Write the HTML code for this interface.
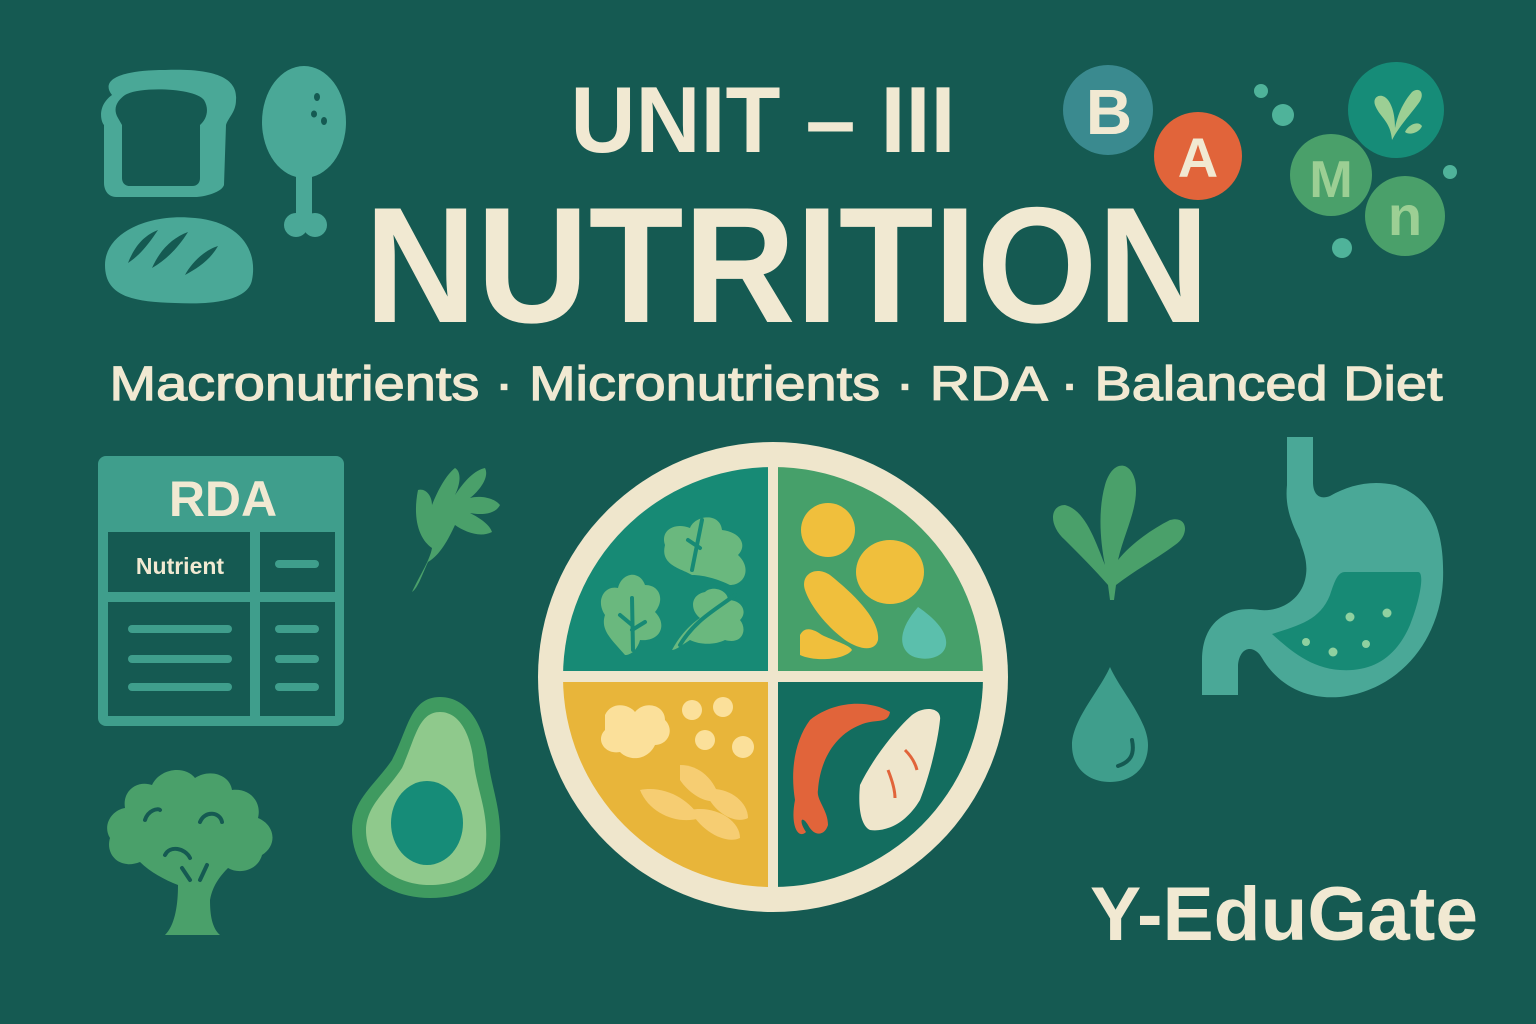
<!DOCTYPE html>
<html><head><meta charset="utf-8"><style>html,body{margin:0;padding:0;background:#155a52;}svg{display:block}</style></head>
<body>
<svg width="1536" height="1024" viewBox="0 0 1536 1024" xmlns="http://www.w3.org/2000/svg" font-family="Liberation Sans, sans-serif">
<rect width="1536" height="1024" fill="#155a52"/>
<!-- bread slice -->
<path d="M112 95 C100 80 120 70 165 70 C215 68 238 78 236 100 C236 112 228 118 226 125 L224 185 C222 192 205 197 195 197 L116 197 C108 197 104 190 104 183 L104 125 C100 120 98 105 112 95 Z" fill="#4aa897"/>
<path d="M125 95 C118 100 112 108 118 118 L122 125 L122 178 C122 183 125 186 130 186 L192 186 C198 186 200 182 200 178 L200 125 C206 120 210 110 204 100 C195 88 140 86 125 95 Z" fill="#155a52"/>
<!-- drumstick -->
<ellipse cx="304" cy="122" rx="42" ry="56" fill="#4aa897"/>
<rect x="296" y="170" width="16" height="50" fill="#4aa897"/>
<circle cx="296" cy="225" r="12" fill="#4aa897"/><circle cx="315" cy="225" r="12" fill="#4aa897"/>
<ellipse cx="317" cy="97" rx="3" ry="4" fill="#155a52"/><ellipse cx="314" cy="114" rx="3" ry="3.5" fill="#155a52"/><ellipse cx="324" cy="121" rx="3" ry="4" fill="#155a52"/>
<!-- loaf -->
<path d="M105 265 C105 232 150 213 195 218 C240 222 258 250 252 280 C248 300 215 305 175 303 C130 302 105 295 105 265 Z" fill="#4aa897"/>
<path d="M128 263 C135 245 145 235 158 230 C148 245 140 255 128 263 Z M152 268 C160 250 172 238 188 232 C178 248 166 260 152 268 Z M185 275 C192 262 205 250 218 246 C210 260 198 268 185 275 Z" fill="#155a52"/>
<!-- title -->
<text x="763" y="152" text-anchor="middle" font-size="94" font-weight="bold" fill="#f1e9d2" textLength="385" lengthAdjust="spacingAndGlyphs">UNIT – III</text>
<text x="787" y="322" text-anchor="middle" font-size="165" font-weight="bold" fill="#f1e9d2" textLength="845" lengthAdjust="spacingAndGlyphs">NUTRITION</text>
<text x="776" y="400" text-anchor="middle" font-size="48" fill="#f1e9d2" stroke="#f1e9d2" stroke-width="1.2" textLength="1333" lengthAdjust="spacingAndGlyphs">Macronutrients · Micronutrients · RDA · Balanced Diet</text>
<!-- vitamins -->
<circle cx="1108" cy="110" r="45" fill="#3a8a8f"/>
<text x="1109" y="134" text-anchor="middle" font-size="64" font-weight="bold" fill="#f1e9d2">B</text>
<circle cx="1198" cy="156" r="44" fill="#e1643a"/>
<text x="1198" y="177" text-anchor="middle" font-size="56" font-weight="bold" fill="#f1e9d2">A</text>
<circle cx="1261" cy="91" r="7" fill="#4fb39a"/><circle cx="1283" cy="115" r="11" fill="#4fb39a"/>
<circle cx="1450" cy="172" r="7" fill="#4fb39a"/><circle cx="1342" cy="248" r="10" fill="#4fb39a"/>
<circle cx="1396" cy="110" r="48" fill="#168c78"/>
<path d="M1392 140 C1390 120 1380 118 1375 105 C1372 96 1382 92 1388 100 C1394 108 1395 120 1395 128 C1398 112 1405 100 1412 92 C1420 86 1426 94 1418 104 C1410 115 1400 125 1392 140 Z M1405 132 C1408 125 1418 120 1422 126 C1420 132 1410 136 1405 132 Z" fill="#9ccf94"/>
<circle cx="1331" cy="175" r="41" fill="#4aa06a"/>
<text x="1331" y="197" text-anchor="middle" font-size="52" font-weight="bold" fill="#9ccf94">M</text>
<circle cx="1405" cy="216" r="40" fill="#4aa06a"/>
<text x="1405" y="235" text-anchor="middle" font-size="56" font-weight="bold" fill="#9ccf94">n</text>
<!-- RDA table -->
<rect x="98" y="456" width="246" height="270" rx="8" fill="#3f9e8c"/>
<text x="223" y="516" text-anchor="middle" font-size="50" font-weight="bold" fill="#f1e9d2">RDA</text>
<rect x="108" y="532" width="142" height="60" fill="#155a52"/>
<rect x="260" y="532" width="75" height="60" fill="#155a52"/>
<rect x="108" y="602" width="142" height="114" fill="#155a52"/>
<rect x="260" y="602" width="75" height="114" fill="#155a52"/>
<text x="180" y="574" text-anchor="middle" font-size="23" font-weight="bold" fill="#f1e9d2">Nutrient</text>
<g stroke="#3f9e8c" stroke-width="8" stroke-linecap="round">
<line x1="279" y1="564" x2="315" y2="564"/><line x1="279" y1="629" x2="315" y2="629"/><line x1="279" y1="659" x2="315" y2="659"/><line x1="279" y1="687" x2="315" y2="687"/>
<line x1="132" y1="629" x2="228" y2="629"/><line x1="132" y1="659" x2="228" y2="659"/><line x1="132" y1="687" x2="228" y2="687"/></g>
<!-- parsley -->
<path d="M412 592 C420 575 430 560 432 548 C420 540 412 520 418 490 C425 488 432 495 432 505 C438 490 446 475 455 468 C462 472 460 485 455 495 C465 480 475 470 485 468 C490 478 478 492 470 498 C480 495 495 498 500 505 C495 515 480 515 470 513 C480 518 490 525 492 532 C480 538 465 532 455 525 C448 540 440 555 428 562 C422 575 418 588 412 592 Z" fill="#4aa06a"/>
<!-- avocado -->
<path d="M440 697 C470 697 485 730 488 760 C492 790 502 810 500 845 C498 880 470 898 430 898 C385 898 352 870 352 830 C352 800 375 785 392 760 C408 730 410 697 440 697 Z" fill="#3f9a60"/>
<path d="M440 712 C462 712 472 740 474 765 C478 792 488 812 486 842 C484 870 462 885 430 885 C395 885 366 863 366 830 C366 805 388 790 402 768 C415 740 418 712 440 712 Z" fill="#8fc98c"/>
<ellipse cx="427" cy="823" rx="36" ry="42" fill="#168c78"/>
<!-- broccoli -->
<path d="M165 935 C175 925 178 905 178 885 C165 880 150 872 140 862 C120 870 105 855 110 838 C102 825 112 810 125 808 C122 790 138 780 152 785 C160 768 185 765 195 778 C210 768 230 775 232 790 C250 788 262 802 258 818 C275 825 278 845 262 855 C258 870 240 875 228 868 C218 878 212 888 210 900 C210 915 212 928 220 935 Z" fill="#4aa06a"/>
<path d="M165 855 C170 845 185 848 190 858 M200 822 C205 810 220 812 222 822 M145 820 C148 810 158 808 160 810 M190 880 L182 868 M200 880 L207 865" stroke="#155a52" stroke-width="4" fill="none" stroke-linecap="round"/>
<!-- plate -->
<circle cx="773" cy="677" r="235" fill="#efe6cc"/>
<clipPath id="pc"><circle cx="773" cy="677" r="210"/></clipPath>
<g clip-path="url(#pc)">
<rect x="560" y="465" width="208" height="206" fill="#178a75"/>
<rect x="778" y="465" width="210" height="206" fill="#46a06a"/>
<rect x="560" y="682" width="208" height="210" fill="#e8b53a"/>
<rect x="778" y="682" width="210" height="210" fill="#136d5f"/>
</g>
<g fill="#6ab87e">
<path d="M625 655 C612 640 600 630 605 615 C595 600 605 585 618 588 C622 572 640 570 645 585 C660 585 665 600 655 612 C668 625 660 642 640 640 C638 648 632 655 625 655 Z"/>
<path d="M692 575 C680 568 660 565 665 545 C660 530 675 522 690 528 C695 515 720 512 722 530 C740 532 748 545 738 555 C752 568 745 585 730 585 C720 580 705 575 692 575 Z"/>
<path d="M672 650 C680 635 690 625 700 618 C690 610 690 595 705 592 C712 585 728 590 728 600 C742 600 748 612 740 620 C748 630 742 645 725 640 C715 645 700 645 690 640 C682 645 676 650 672 650 Z"/>
</g>
<path d="M633 650 L632 598 M632 625 L620 615 M632 630 L645 622 M692 570 L702 520 M700 548 L688 540 M680 645 C695 620 715 610 735 595" stroke="#178a75" stroke-width="4" fill="none" stroke-linecap="round"/>
<circle cx="828" cy="530" r="27" fill="#f0bf3c"/>
<ellipse cx="890" cy="572" rx="34" ry="32" fill="#f0bf3c"/>
<path d="M805 590 C800 575 815 565 830 575 C855 595 880 620 878 640 C875 652 860 650 845 640 C825 625 810 605 805 590 Z" fill="#f0bf3c"/>
<path d="M800 635 C805 625 815 630 822 635 C832 640 850 645 852 650 C845 660 815 662 800 655 Z" fill="#f0bf3c"/>
<path d="M918 607 C930 615 948 630 946 645 C944 658 925 662 912 656 C898 648 898 630 918 607 Z" fill="#5bbfac"/>
<g fill="#fbe09a">
<path d="M605 715 C612 700 630 705 635 712 C645 700 665 705 665 720 C675 730 668 745 655 745 C648 760 630 762 620 752 C605 755 595 740 605 730 Z"/>
<circle cx="692" cy="710" r="10"/><circle cx="723" cy="707" r="10"/><circle cx="705" cy="740" r="10"/><circle cx="743" cy="747" r="11"/>
</g>
<g fill="#f6cd72">
<path d="M680 765 C700 765 715 780 720 800 C708 805 690 795 680 780 Z"/>
<path d="M705 790 C725 785 748 800 748 818 C735 825 712 812 705 790 Z"/>
<path d="M640 790 C665 785 690 800 700 818 C680 825 650 815 640 790 Z"/>
<path d="M690 810 C715 805 740 820 740 838 C725 845 700 830 690 810 Z"/>
</g>
<path d="M810 720 C835 700 870 700 890 712 C888 725 875 718 860 725 C835 735 820 760 818 790 C816 800 828 810 828 825 C825 835 815 838 808 825 C802 815 798 820 806 832 C798 840 790 825 795 800 C790 770 795 740 810 720 Z" fill="#e1643a"/>
<path d="M860 785 C872 760 895 730 912 715 C925 705 942 708 940 720 C938 740 930 775 920 800 C905 825 885 832 870 830 C860 825 858 805 860 785 Z" fill="#efe6cc"/>
<path d="M905 750 C910 755 915 762 917 770 M888 770 C892 780 895 790 895 798" stroke="#e1643a" stroke-width="3" fill="none"/>
<!-- spinach -->
<path d="M1110 600 L1108 585 C1095 570 1080 555 1065 540 C1048 525 1050 505 1065 505 C1085 510 1095 540 1105 565 C1100 540 1098 510 1105 485 C1112 460 1130 460 1135 480 C1140 505 1125 530 1118 560 C1130 545 1150 530 1170 520 C1188 515 1190 535 1175 545 C1155 560 1135 570 1116 585 L1114 600 Z" fill="#4aa06a"/>
<!-- drop -->
<path d="M1110 667 C1120 690 1148 720 1148 745 C1148 768 1132 782 1110 782 C1088 782 1072 768 1072 745 C1072 720 1100 690 1110 667 Z" fill="#3f9e8c"/>
<path d="M1132 740 C1135 755 1130 762 1118 766" stroke="#155a52" stroke-width="4" fill="none" stroke-linecap="round"/>
<!-- stomach -->
<path d="M1287 437 L1313 437 L1313 482 C1313 495 1320 500 1330 496 C1350 485 1370 480 1395 485 C1425 495 1445 520 1443 580 C1440 640 1400 690 1340 697 C1300 700 1275 680 1262 658 C1255 645 1240 645 1238 665 L1238 695 L1202 695 L1202 660 C1202 620 1230 605 1260 610 C1280 612 1300 600 1305 580 C1310 560 1300 545 1300 540 C1290 520 1285 505 1287 485 Z" fill="#4aa897"/>
<path d="M1345 572 L1418 572 C1425 572 1420 600 1410 625 C1395 660 1370 672 1340 670 C1310 668 1290 650 1272 634 C1300 625 1320 620 1330 595 C1335 580 1338 572 1345 572 Z" fill="#178a75"/>
<g fill="#8fd1a0"><circle cx="1350" cy="617" r="4.5"/><circle cx="1387" cy="613" r="4.5"/><circle cx="1306" cy="642" r="4"/><circle cx="1333" cy="652" r="4.5"/><circle cx="1366" cy="644" r="4"/></g>
<!-- brand -->
<text x="1284" y="940" text-anchor="middle" font-size="76" font-weight="bold" fill="#f1e9d2" textLength="388" lengthAdjust="spacingAndGlyphs">Y-EduGate</text>
</svg>
</body></html>
